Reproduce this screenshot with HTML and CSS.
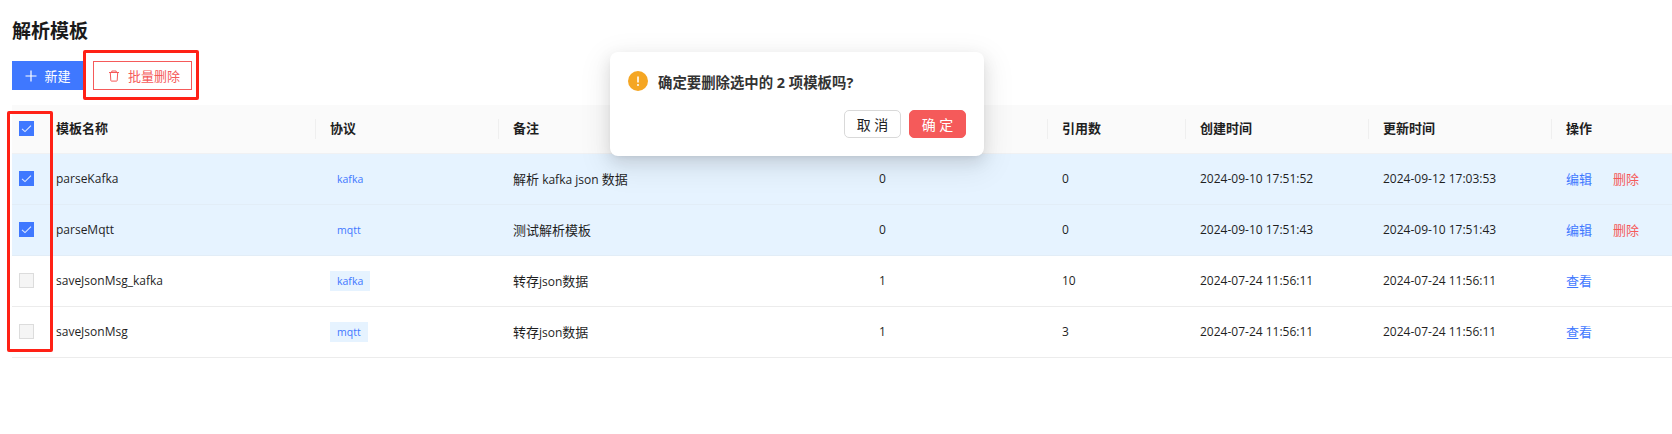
FILE: index.html
```html
<!DOCTYPE html>
<html lang="zh-CN">
<head>
<meta charset="utf-8">
<title>解析模板</title>
<link rel="stylesheet" href="styles.css">
</head>
<body>
<main class="page">
  <h1 class="title">解析模板</h1>
  <div class="toolbar">
    <button class="btn btn-primary"><svg class="ic" viewBox="0 0 12 12"><path d="M6 .5v11M.5 6h11" fill="none" stroke="currentColor" stroke-width="1.2"/></svg><span>新建</span></button>
    <button class="btn btn-danger"><svg class="ic" viewBox="0 0 12 12"><path d="M1 2.5h10M3.8 2.5V1h4.4v1.5M2.3 2.5l.5 8a.6.6 0 0 0 .6.6h5.2a.6.6 0 0 0 .6-.6l.5-8" fill="none" stroke="currentColor" stroke-width="1"/></svg><span>批量删除</span></button>
  </div>
  <table class="grid">
    <colgroup>
      <col class="c-check"><col class="c-name"><col class="c-proto"><col class="c-note"><col class="c-count"><col class="c-ref"><col class="c-time"><col class="c-time"><col class="c-op">
    </colgroup>
    <thead>
      <tr>
        <th><span class="check on"><svg viewBox="0 0 13 13"><path d="M2 6.8l3 2.8 6-6" fill="none" stroke="#dfe9ff" stroke-width="1.1"/></svg></span></th>
        <th class="nosep">模板名称</th><th>协议</th><th>备注</th><th>&nbsp;</th><th>引用数</th><th>创建时间</th><th>更新时间</th><th>操作</th>
      </tr>
    </thead>
    <tbody>
      <tr class="sel">
        <td><span class="check on"><svg viewBox="0 0 13 13"><path d="M2 6.8l3 2.8 6-6" fill="none" stroke="#dfe9ff" stroke-width="1.1"/></svg></span></td>
        <td>parseKafka</td><td><span class="tag">kafka</span></td><td><span class="zh">解析</span> kafka json <span class="zh">数据</span></td><td>0</td><td>0</td><td>2024-09-10 17:51:52</td><td>2024-09-12 17:03:53</td>
        <td><a class="link">编辑</a><a class="link del">删除</a></td>
      </tr>
      <tr class="sel">
        <td><span class="check on"><svg viewBox="0 0 13 13"><path d="M2 6.8l3 2.8 6-6" fill="none" stroke="#dfe9ff" stroke-width="1.1"/></svg></span></td>
        <td>parseMqtt</td><td><span class="tag">mqtt</span></td><td><span class="zh">测试解析模板</span></td><td>0</td><td>0</td><td>2024-09-10 17:51:43</td><td>2024-09-10 17:51:43</td>
        <td><a class="link">编辑</a><a class="link del">删除</a></td>
      </tr>
      <tr>
        <td><span class="check"></span></td>
        <td>saveJsonMsg_kafka</td><td><span class="tag">kafka</span></td><td><span class="zh">转存</span>json<span class="zh">数据</span></td><td>1</td><td>10</td><td>2024-07-24 11:56:11</td><td>2024-07-24 11:56:11</td>
        <td><a class="link">查看</a></td>
      </tr>
      <tr>
        <td><span class="check"></span></td>
        <td>saveJsonMsg</td><td><span class="tag">mqtt</span></td><td><span class="zh">转存</span>json<span class="zh">数据</span></td><td>1</td><td>3</td><td>2024-07-24 11:56:11</td><td>2024-07-24 11:56:11</td>
        <td><a class="link">查看</a></td>
      </tr>
    </tbody>
  </table>
</main>

<div class="mark mark-btn"></div>
<div class="mark mark-col"></div>

<section class="popconfirm">
  <div class="pop-msg">
    <svg class="pop-ic" viewBox="0 0 20 20"><circle cx="10" cy="10" r="10" fill="#f5a623"/><path d="M10 5.5v6" stroke="#fff" stroke-width="1.6"/><circle cx="10" cy="14" r="1" fill="#fff"/></svg>
    <span>确定要删除选中的 2 项模板吗?</span>
  </div>
  <div class="pop-actions">
    <button class="pbtn">取 消</button>
    <button class="pbtn pbtn-ok">确 定</button>
  </div>
</section>
</body>
</html>
```
FILE: styles.css
```css
* { box-sizing: border-box; }
html, body { margin: 0; height: 100%; overflow: hidden; background: #fff; }
body { font-family: "Open Sans", "Noto Sans CJK SC", sans-serif; font-size: 13px; color: #1f1f1f; position: relative; }
.page { padding: 18px 0 0 12px; }
.title { margin: 0; font-size: 19px; line-height: 26px; font-weight: 700; color: #1a1a1a; }
.toolbar { display: flex; gap: 9px; margin-top: 17px; height: 29px; }
.btn { height: 29px; border: 1px solid; padding: 0; display: flex; align-items: center; justify-content: center; font: inherit; font-size: 13px; background: #fff; }
.btn-primary { width: 72px; background: #3f78ff; border-color: #3f78ff; color: #fff; gap: 7px; }
.btn-danger { width: 99px; padding-left: 3px; border-color: #f55a5a; color: #f55a5a; gap: 8px; }
.ic { width: 12px; height: 12px; }
.grid { border-collapse: collapse; table-layout: fixed; width: 1660px; margin-top: 15px; }
.c-check { width: 30px; } .c-name { width: 274px; } .c-proto { width: 183px; } .c-note { width: 366px; }
.c-count { width: 183px; } .c-ref { width: 138px; } .c-time { width: 183px; } .c-op { width: 120px; }
th { height: 48px; padding: 0 14px 2px; background: #fafafa; text-align: left; font-weight: 700; position: relative; color: #1f1f1f; border-bottom: 1px solid #f0f1f3; }
th + th::before { content: ""; position: absolute; left: -1px; top: 14px; height: 20px; width: 1px; background: #efefef; }
th.nosep::before { display: none; }
th:first-child, td:first-child { padding: 0 0 0 7px; }
td { height: 51px; padding: 0 14px; border-bottom: 1px solid #ececec; white-space: nowrap; font-size: 12px; }
.zh { font-size: 13px; }
tr.sel td { background: #e6f3ff; border-bottom-color: #e2edf7; }
.check { display: block; width: 15px; height: 15px; background: #f5f5f5; border: 1px solid #dcdcdc; }
.check.on { background: #3f78ff; border-color: #3f78ff; }
.check svg { display: block; width: 13px; height: 13px; }
.tag { display: inline-block; padding: 0 7px; height: 20px; line-height: 20px; font-size: 10.5px; background: #e6f3ff; color: #3f78ff; }
.link { color: #3f78ff; margin-right: 21px; font-size: 13px; }
.link.del { color: #f55a5a; margin-right: 0; }
.mark { position: absolute; border: 3px solid #ff2116; border-radius: 2px; }
.mark-btn { left: 83px; top: 50px; width: 116px; height: 50px; }
.mark-col { left: 7px; top: 111px; width: 46px; height: 241px; }
.popconfirm { position: absolute; left: 610px; top: 52px; width: 374px; height: 104px; background: #fff; border-radius: 8px; box-shadow: 0 6px 16px rgba(0,0,0,.1), 0 3px 6px -4px rgba(0,0,0,.12), 0 9px 28px 8px rgba(0,0,0,.06); padding: 19px 18px 0; }
.pop-msg { display: flex; align-items: center; gap: 10px; font-size: 14.4px; font-weight: 700; color: #333; height: 20px; }
.pop-ic { width: 20px; height: 20px; }
.pop-actions { display: flex; justify-content: flex-end; gap: 8px; margin-top: 19px; }
.pbtn { width: 57px; height: 28px; border: 1px solid #d9d9d9; border-radius: 5px; background: #fff; font: inherit; font-size: 14px; color: #222; padding: 0; }
.pbtn-ok { background: #f55a5a; border-color: #f55a5a; color: #fff; }
```
